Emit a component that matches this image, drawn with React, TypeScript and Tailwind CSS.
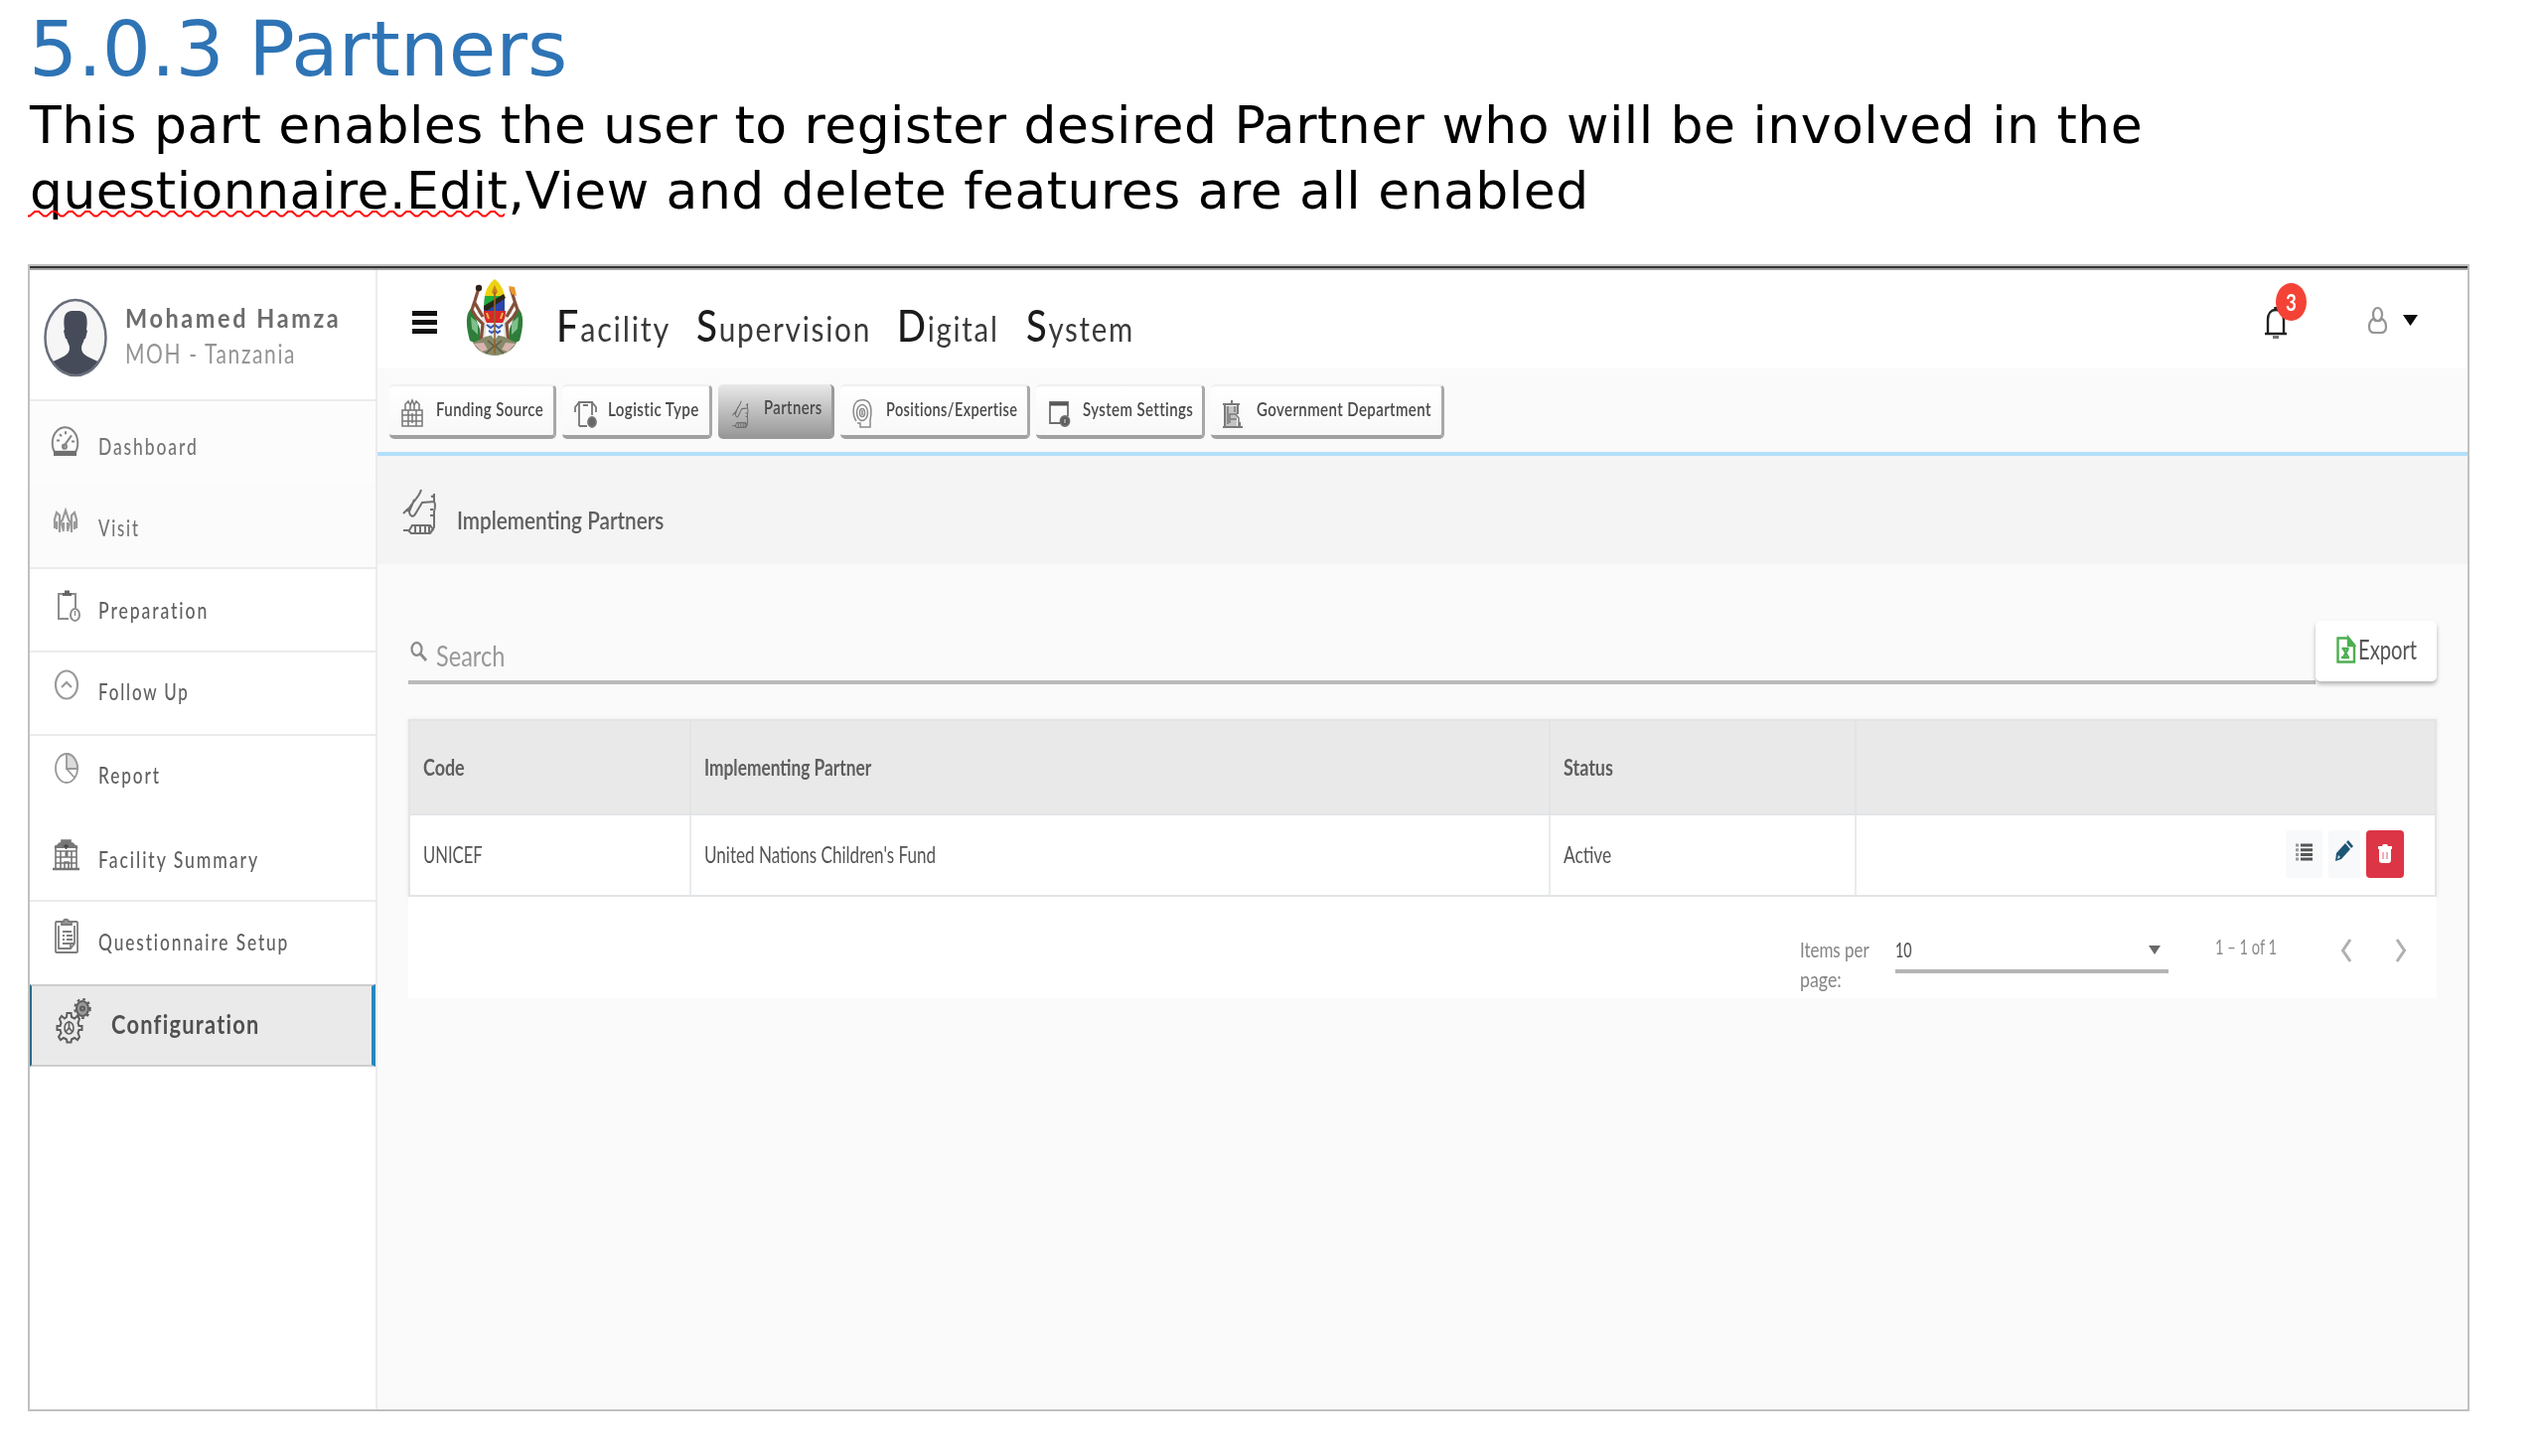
import { useLayoutEffect, useRef, useState } from "react";
import type { ReactNode } from "react";

/* Single line of text, condensed or stretched horizontally to fill its box. */
function Fit({ className, children }: { className: string; children: ReactNode }) {
  const outer = useRef<HTMLDivElement>(null);
  const inner = useRef<HTMLSpanElement>(null);
  const [ratio, setRatio] = useState(1);
  useLayoutEffect(() => {
    if (outer.current && inner.current) {
      setRatio(outer.current.clientWidth / inner.current.offsetWidth);
    }
  }, []);
  return (
    <div ref={outer} className={"shrink-0 whitespace-nowrap " + className}>
      <span ref={inner} className="inline-block origin-left" style={{ transform: `scaleX(${ratio})` }}>
        {children}
      </span>
    </div>
  );
}

function Icon({ box, className, children, sw = 1.5 }: { box: string; className: string; children: ReactNode; sw?: number }) {
  return (
    <svg
      viewBox={box}
      preserveAspectRatio="none"
      className={"block shrink-0 overflow-visible " + className}
      fill="none"
      stroke="currentColor"
      strokeWidth={sw}
    >
      {children}
    </svg>
  );
}

const Gauge = () => (
  <Icon box="0 0 27 29" className="h-[30px] w-[27px] text-[#858585]" sw={2}>
    <path d="M4 27C-1 20 0 10 5 5 10 0 17 0 22 5 27 10 28 20 23 27Z" />
    <path d="M2 26.500h23" strokeWidth={5} stroke="#707070" />
    <path d="M12 20l8-11M13 21l-2-3M5 14h3M8 8l2 2M14 5v3M20 15h3" />
    <circle cx="13" cy="20" r="2" />
  </Icon>
);

const People = () => (
  <Icon box="0 0 26 25" className="h-[25px] w-[26px] text-[#9a9a9a]" sw={2.200}>
    <path d="M2 19V10L4 3l3 3v9l3-5 3-9 3 9 3 5V6l3-3 2 7v9" />
    <path d="M4 20v-8M22 20v-8M7 23v-8M19 23v-8M11 20v-7M15 20v-7" />
    <path d="M9 14l2 8M17 14l-2 8" />
  </Icon>
);

const Clipboard = () => (
  <Icon box="0 0 24 32" className="h-[32px] w-[24px] text-[#8d8d8d]" sw={2}>
    <path d="M12 29H2V4h17v14" />
    <path d="M6 4.500h9M8 2h5" strokeWidth={3} stroke="#666" />
    <ellipse cx="18.500" cy="25" rx="4.500" ry="6" />
    <path d="M18.500 21v5" strokeWidth={1.500} />
  </Icon>
);

const UpCircle = () => (
  <Icon box="0 0 24 31" className="h-[31px] w-[24px] text-[#9a9a9a]" sw={2.200}>
    <ellipse cx="12" cy="15.500" rx="11" ry="14" />
    <path d="M7 18l5-5 5 5" />
  </Icon>
);

const Pie = () => (
  <Icon box="0 0 24 31" className="h-[31px] w-[24px] text-[#999]" sw={1.800}>
    <ellipse cx="12" cy="15.500" rx="11" ry="14.500" />
    <path d="M12 1v15h11C23 8 18 1 12 1Z" fill="#dcdcdc" />
    <path d="M12 16l8 9" />
  </Icon>
);

const Hospital = () => (
  <Icon box="0 0 27 31" className="h-[31px] w-[27px] text-[#757575]" sw={1.600}>
    <path d="M3 30V6M24 30V6M3 12h21M3 18h21M3 24h21M8 12v18M19 12v18M12 30v-7h4v7" />
    <path d="M2 9l5-5h13l5 5M9 4V1h9v3" fill="#777" />
    <path d="M11 7h5M13.500 5v5" stroke="#444" />
    <path d="M13 13h1v5" strokeWidth={3} />
    <path d="M0 30h27" strokeWidth={2.500} />
  </Icon>
);

const Survey = () => (
  <Icon box="0 0 24 35" className="h-[35px] w-[24px] text-[#7d7d7d]" sw={1.800}>
    <rect x="1" y="3" width="22" height="31" rx="1" />
    <path d="M4 7v23h12l4-5V7" />
    <path d="M7 6h10V3h-3c0-3-5-3-5 0H7Z" fill="#999" />
    <path d="M8 13h9M8 17h2M12 17h6M8 21h2M12 21h6M8 25h7" />
    <path d="M16 30v-5h4" />
  </Icon>
);

const Gears = () => (
  <Icon box="0 0 36 44" className="h-[44px] w-[36px] text-[#5d5d5d]" sw={2}>
    <path
      d="M11.500 15h4l.5 4 3 1.500 3-2.500 2 3-1.500 4 1 3h3v4h-3l-1 3 1.500 4-2 3-3-2-3 1.500-.5 3h-4l-.5-3-3-1.500-3 2-2-3L5.500 35l-1-3H1.500v-4h3l1-3L4 21l2-3 3 2.500 2-1.500Z"
    />
    <ellipse cx="13.500" cy="30" rx="4.500" ry="6" strokeWidth={1.600} />
    <path d="M13.500 23v8M10 34l3.500-4 3.500 4" strokeWidth={1.600} />
    <ellipse cx="27" cy="10.500" rx="6" ry="7.500" fill="#9a9a9a" />
    <ellipse cx="27" cy="10.500" rx="7.700" ry="9.500" strokeDasharray="2.800 3" strokeWidth={2} />
    <circle cx="27" cy="10.500" r="2" />
  </Icon>
);

const menu = [
  { label: "Dashboard", icon: <Gauge />, row: "bg-[#fcfcfc] h-[84px]", ic: "pt-[25px] pl-[22px]", tx: "pt-[32px] w-[101px]", text: "text-[#747474]" },
  { label: "Visit", icon: <People />, row: "bg-[#fbfbfb] h-[85px] border-b-2 border-[#ebebeb]", ic: "pt-[25px] pl-[23px]", tx: "pt-[30px] w-[42px]", text: "text-[#747474]" },
  { label: "Preparation", icon: <Clipboard />, row: "h-[84px] border-b-2 border-[#ebebeb]", ic: "pt-[21px] pl-[27px]", tx: "pt-[28px] w-[111px]", text: "text-[#606060]" },
  { label: "Follow Up", icon: <UpCircle />, row: "h-[84px] border-b-2 border-[#ebebeb]", ic: "pt-[17px] pl-[25px]", tx: "pt-[26px] w-[92px]", text: "text-[#606060]" },
  { label: "Report", icon: <Pie />, row: "h-[83px]", ic: "pt-[17px] pl-[25px]", tx: "pt-[26px] w-[63px]", text: "text-[#606060]" },
  { label: "Facility Summary", icon: <Hospital />, row: "h-[84px] border-b-2 border-[#ebebeb]", ic: "pt-[21px] pl-[23px]", tx: "pt-[28px] w-[162px]", text: "text-[#606060]" },
  { label: "Questionnaire Setup", icon: <Survey />, row: "h-[83px]", ic: "pt-[17px] pl-[25px]", tx: "pt-[27px] w-[192px]", text: "text-[#606060]" },
];

const FundingIcon = () => (
  <Icon box="0 0 22 28" className="h-[28px] w-[22px] text-[#777]">
    <rect x="1" y="11" width="20" height="16" />
    <path d="M1 16h20M1 22h20M7 11v16M15 11v16M11 14v10M4 11V5l3-3 2 4 2-5 2 5 2-4 3 3v6M9 11V6M13 11V6" />
  </Icon>
);
const LogisticIcon = () => (
  <Icon box="0 0 23 29" className="h-[29px] w-[23px] text-[#777]" sw={1.800}>
    <path d="M5 27V3h13v13M13 27H5M5 3L1 8v5M18 3l4 5v5M9 6h5" />
    <ellipse cx="18" cy="23" rx="4" ry="5" fill="#666" />
  </Icon>
);
const HandIcon = ({ className }: { className: string }) => (
  <Icon box="0 0 35 46" className={className} sw={2}>
    <path d="M19 1c-2 8-9 12-14 22M1 25l5-5M7 22c0 6 4 8 7 2l6-10 13-1M12 11L7 23M32 5v8c2 3 1 6 0 10v16l-3 4M29 8l4-1M28 21h3M28 27h3" />
    <path d="M1 42h6l3-5h18l3 4-3 4H9l-3-3M13 37v8M18 37v8M23 37v8M27 38v6" />
  </Icon>
);
const HeadIcon = () => (
  <Icon box="0 0 20 29" className="h-[29px] w-[20px] text-[#8a8a8a]">
    <path d="M4 22C0 16 0 6 5 2c4-2 10-2 12 2 3 5 2 12 1 17v7H8v-4H5" />
    <ellipse cx="10" cy="13.500" rx="5.500" ry="8" />
    <ellipse cx="10" cy="13.500" rx="2.500" ry="4" />
    <path d="M10 11v5" />
  </Icon>
);
const WindowIcon = () => (
  <Icon box="0 0 21 26" className="mt-[2px] h-[26px] w-[21px] text-[#6e6e6e]" sw={1.800}>
    <path d="M12 22H1V1h18v14" />
    <path d="M1 3h18" strokeWidth={3} stroke="#555" />
    <ellipse cx="16" cy="20" rx="4.500" ry="5" fill="#5d5d5d" />
    <path d="M16 18v4" stroke="#ddd" strokeWidth={1} />
  </Icon>
);
const BuildingIcon = () => (
  <Icon box="0 0 20 28" className="mt-[1px] h-[28px] w-[20px] text-[#7a7a7a]">
    <path d="M0 4h17M9 0v4M2 4v23h6M15 4v10" strokeWidth={2} />
    <rect x="3" y="6" width="11" height="20" fill="#c4c4c4" stroke="none" />
    <path d="M5 6v18M12 6v6M7 23V14h6l3 4v8M8 19h6" />
    <path d="M0 27h20M17 22v5" strokeWidth={2} />
  </Icon>
);

const tabs = [
  { label: "Funding Source", w: "w-[168px] pl-[12px] gap-[13px]", t: "w-[108px]", icon: <FundingIcon /> },
  { label: "Logistic Type", w: "w-[151px] pl-[12px] gap-[11px]", t: "w-[92px]", icon: <LogisticIcon /> },
  { label: "Partners", w: "w-[117px] pl-[14px] gap-[15px]", t: "w-[59px]", icon: <HandIcon className="h-[28px] w-[17px] text-[#6f6f6f]" />, active: true },
  { label: "Positions/Expertise", w: "w-[191px] pl-[12px] gap-[14px]", t: "w-[132px]", icon: <HeadIcon /> },
  { label: "System Settings", w: "w-[170px] pl-[13px] gap-[13px]", t: "w-[111px]", icon: <WindowIcon /> },
  { label: "Government Department", w: "w-[235px] pl-[12px] gap-[14px]", t: "w-[176px]", icon: <BuildingIcon /> },
];

const Avatar = () => (
  <svg viewBox="0 0 64 80" className="block h-[80px] w-[64px] shrink-0">
    <defs>
      <clipPath id="face"><ellipse cx="32" cy="40" rx="30" ry="38" /></clipPath>
    </defs>
    <ellipse cx="32" cy="40" rx="30.500" ry="38" fill="#f6f6f6" />
    <g clipPath="url(#face)" fill="#454b58">
      <path d="M21 32C18 12 26 13 32 13c6 0 14-1 11 19l1 1-2 8h-1c-1 4-3 6-3 9 0 8 7 9 21 16v15H5V66c14-7 21-8 21-16 0-3-2-5-3-9h-1l-2-8Z" />
    </g>
    <ellipse cx="32" cy="40" rx="30.500" ry="38" fill="none" stroke="#6a6f7c" strokeWidth="2.500" />
  </svg>
);

const Emblem = () => (
  <svg viewBox="0 0 58 78" className="block h-[78px] w-[58px] shrink-0">
    <path d="M6 29C-1 34 0 48 4 62l12 6-2-18Z" fill="#2f7d3a" />
    <path d="M52 29c7 5 6 19 2 33l-12 6 2-18Z" fill="#2f7d3a" />
    <path d="M5 38l7 6v12l-6-6Z" fill="#7fbf8b" />
    <path d="M53 38l-7 6v12l6-6Z" fill="#7fbf8b" />
    <path d="M12 32l7 4-2 22M46 32l-7 4 2 22" fill="none" stroke="#e4e4de" strokeWidth="5" />
    <path d="M13 9l-4 13-3 9 5 8 6 6-2 19M9 24l8 14" fill="none" stroke="#84503a" strokeWidth="3.200" />
    <path d="M45 9l4 13 3 9-5 8-6 6 2 19M49 24l-8 14" fill="none" stroke="#84503a" strokeWidth="3.200" />
    <circle cx="13" cy="9" r="3.200" fill="#2e211c" />
    <path d="M43 7l6 1 2 9-5-2Z" fill="#e8972b" />
    <path d="M14 61c7-6 23-6 30 0l7 3c-4 8-13 13-22 13S11 72 7 64Z" fill="#868a68" />
    <path d="M8 65l10-1 4 7-6 2ZM50 65l-10-1-4 7 6 2Z" fill="#d8b4b0" />
    <path d="M20 75l9-8 9 8M22 62l7 6 7-6" fill="none" stroke="#5c5c4a" strokeWidth="1.600" />
    <path d="M29 0c-5 4-9 10-10 17h20C38 10 34 4 29 0Z" fill="#ecd312" />
    <path d="M29 6l-3 7 3 4 3-4Z" fill="#c9801c" />
    <path d="M19 17h20v17H18Z" fill="#2b45a8" />
    <path d="M19 17h18L18 31Z" fill="#1fae39" />
    <path d="M18 31v-4l20-12 2 4-19 13Z" fill="#2a2716" />
    <path d="M18 32h22c0 5-1 9-3 12H21c-2-3-3-7-3-12Z" fill="#d8282a" />
    <path d="M21 34l2 6M37 34l-2 6" stroke="#e7b93b" strokeWidth="2" />
    <path d="M21 44h16c-1 8-4 13-8 17-4-4-7-9-8-17Z" fill="#dfe6f4" />
    <path d="M21 46l4 3 4-3 4 3 4-3M23 52l3 2 3-2 3 2 3-2" fill="none" stroke="#3458b4" strokeWidth="2" />
    <path d="M29 13v62" stroke="#94642b" strokeWidth="1.600" />
  </svg>
);

function Sidebar() {
  return (
    <aside className="flex w-[350px] shrink-0 flex-col border-r-2 border-[#ececec] bg-white">
      <div className="flex h-[132px] border-b-2 border-[#ebebeb] pt-[28px] pl-[14px]">
        <Avatar />
        <div className="pt-[4px] pl-[18px]">
          <Fit className="w-[217px] text-[27px] font-bold leading-[32px] tracking-[3px] text-[#6c6c6c]">Mohamed Hamza</Fit>
          <Fit className="w-[172px] pt-[4px] text-[26px] leading-[32px] tracking-[2px] text-[#949494]">MOH - Tanzania</Fit>
        </div>
      </div>
      {menu.map((m) => (
        <div key={m.label} className={"flex " + m.row}>
          <div className={"w-[69px] " + m.ic}>{m.icon}</div>
          <Fit className={"text-[23px] font-medium leading-[26px] tracking-[2.500px] " + m.tx + " " + m.text}>{m.label}</Fit>
        </div>
      ))}
      <div className="flex h-[83px] border-y-2 border-r-4 border-l-2 border-y-[#cdcdcd] border-r-[#2488c2] border-l-[#2d6b88] bg-[#eaeaea]">
        <div className="w-[80px] pt-[12px] pl-[24px]"><Gears /></div>
        <Fit className="w-[150px] pt-[23px] text-[26px] font-bold leading-[30px] tracking-[1.500px] text-[#505050]">Configuration</Fit>
      </div>
    </aside>
  );
}

function TitleWord({ first, rest, className }: { first: string; rest: string; className: string }) {
  return (
    <Fit className={"text-[44px] font-medium leading-[44px] tracking-[2px] text-[#1b1b1b] " + className}>
      {first}<span className="text-[34px] font-normal text-[#3a3a3a]">{rest}</span>
    </Fit>
  );
}

function Header() {
  return (
    <header className="flex h-[99px] shrink-0 bg-white">
      <div className="flex w-[89px] flex-col gap-[4px] pt-[41px] pl-[35px]">
        <div className="h-[5px] w-[25px] bg-[#111]" />
        <div className="h-[5px] w-[25px] bg-[#111]" />
        <div className="h-[5px] w-[25px] bg-[#111]" />
      </div>
      <div className="pt-[9px]"><Emblem /></div>
      <div className="flex grow pt-[33px] pl-[33px]">
        <TitleWord first="F" rest="acility" className="mr-[26px] w-[115px]" />
        <TitleWord first="S" rest="upervision" className="mr-[26px] w-[176px]" />
        <TitleWord first="D" rest="igital" className="mr-[27px] w-[103px]" />
        <TitleWord first="S" rest="ystem" className="w-[109px]" />
      </div>
      <div className="relative w-[105px] pt-[36px]">
        <Icon box="0 0 24 33" className="h-[33px] w-[24px] text-[#222]" sw={2.400}>
          <path d="M4 27V14C4 8 7 4 12 4s8 4 8 10v13M1 28h22" />
          <path d="M12 1v4" strokeWidth={3.500} />
          <path d="M9 31.500h6" stroke="#777" strokeWidth={3} />
        </Icon>
        <div className="absolute top-[13px] left-[12px] flex h-[38px] w-[31px] items-center justify-center rounded-[50%] bg-[#f44336] text-[22px] font-bold text-white">
          <span className="scale-x-[0.850]">3</span>
        </div>
      </div>
      <div className="w-[35px] pt-[37px]">
        <Icon box="0 0 19 27" className="h-[27px] w-[19px] text-[#949494]" sw={2.200}>
          <ellipse cx="9.500" cy="7.500" rx="4.500" ry="6.500" />
          <path d="M5 12c-3 2-4 5-4 8 0 4 2 6 5 6h7c3 0 5-2 5-6 0-3-1-6-4-8-2 3-7 3-9 0Z" />
        </Icon>
      </div>
      <div className="w-[65px] pt-[45px]">
        <svg viewBox="0 0 15 11" className="block h-[11px] w-[15px]"><path d="M0 0h15L7.500 11Z" fill="#0b0b0b" /></svg>
      </div>
    </header>
  );
}

function Tabs() {
  return (
    <nav className="flex h-[88px] shrink-0 gap-[6px] border-b-4 border-[#b3e0fb] bg-[#fafafa] pt-[16px] pl-[12px]">
      {tabs.map((t) => (
        <div
          key={t.label}
          className={
            "flex h-[55px] shrink-0 rounded-[5px] border-r-3 border-b-4 " +
            (t.active
              ? "border-r-[#9a9a9a] border-b-[#989898] bg-linear-to-b from-[#e9e9e9] to-[#9b9b9b] pt-[16px] "
              : "border-t-2 border-t-[#f0f0f0] border-r-[#a8a8a8] border-b-[#a0a0a0] bg-linear-to-b from-white to-[#f8f8f8] pt-[13px] ") +
            t.w
          }
        >
          {t.icon}
          <Fit
            className={
              (t.active ? "mt-[-3px] " : "") +
              "text-[19.500px] font-semibold leading-[20px] tracking-[0.500px] text-[#4a4a4a] " +
              t.t
            }
          >
            {t.label}
          </Fit>
        </div>
      ))}
    </nav>
  );
}

const cols = "grid grid-cols-[283px_865px_308px_1fr]";

function Table() {
  return (
    <div className="border-2 border-[#e2e5e8] shadow-[0_0_4px_rgba(0,0,0,0.080)]">
      <div className={cols + " h-[95px] divide-x-2 divide-[#e2e4e6] border-b-2 border-[#e2e4e6] bg-[#e9e9e9] text-[23px] font-bold leading-[28px] text-[#5e5e5e]"}>
        <div className="pt-[32px] pl-[13px]"><Fit className="w-[42px]">Code</Fit></div>
        <div className="pt-[32px] pl-[13px]"><Fit className="w-[168px]">Implementing Partner</Fit></div>
        <div className="pt-[32px] pl-[13px]"><Fit className="w-[50px]">Status</Fit></div>
        <div />
      </div>
      <div className={cols + " h-[80px] divide-x-2 divide-[#e9ebed] bg-white text-[23px] leading-[28px] text-[#555]"}>
        <div className="pt-[25px] pl-[13px]"><Fit className="w-[60px]">UNICEF</Fit></div>
        <div className="pt-[25px] pl-[13px]"><Fit className="w-[233px]">United Nations Children's Fund</Fit></div>
        <div className="pt-[25px] pl-[13px]"><Fit className="w-[48px]">Active</Fit></div>
        <div className="flex justify-end gap-[6px] pt-[15px] pr-[31px]">
          <div className="flex h-[48px] w-[37px] justify-center rounded-[3px] bg-[#f8f9fa] pt-[13px]">
            <Icon box="0 0 17 18" className="h-[18px] w-[17px] text-[#555]" sw={3}>
              <path d="M5 2h12M5 6.700h12M5 11.400h12M5 16h12" />
              <path d="M0 2h3M0 6.700h3M0 11.400h3M0 16h3" stroke="#999" />
            </Icon>
          </div>
          <div className="flex h-[48px] w-[32px] justify-center rounded-[3px] bg-[#f8f9fa] pt-[10px]">
            <svg viewBox="0 0 18 22" className="block h-[22px] w-[18px]">
              <path d="M0 21l1-8L10 3l5 6-9 10Z" fill="#1d5675" />
              <path d="M11 2l2-2 5 6-2 2Z" fill="#1d5675" />
              <path d="M2 19l1-4 2 2Z" fill="#dfe8ee" />
            </svg>
          </div>
          <div className="flex h-[48px] w-[38px] justify-center rounded-[4px] bg-[#dc3545] pt-[14px]">
            <svg viewBox="0 0 14 19" className="block h-[19px] w-[14px]">
              <path d="M0 2h4l1-2h4l1 2h4v3H0Z" fill="#fff" />
              <path d="M1 5h12v11q0 3-3 3H4q-3 0-3-3Z" fill="#fff" />
              <path d="M5 8v7M9 8v7" stroke="#ee9aa2" strokeWidth="1.600" />
            </svg>
          </div>
        </div>
      </div>
    </div>
  );
}

function Pager() {
  return (
    <div className="flex h-[102px] justify-end bg-white text-[22px] leading-[30px] text-[#858585]">
      <div className="w-[96px] pt-[38px]">
        <Fit className="w-[70px]">Items per</Fit>
        <Fit className="w-[42px]">page:</Fit>
      </div>
      <div className="mt-[38px] flex h-[39px] w-[275px] justify-between border-b-4 border-[#b5b5b5] pr-[8px]">
        <Fit className="w-[17px] font-medium text-[#555]">10</Fit>
        <svg viewBox="0 0 12 9" className="mt-[11px] block h-[9px] w-[12px]"><path d="M0 0h12L6 9Z" fill="#6a6a6a" /></svg>
      </div>
      <div className="w-[174px] pt-[35px] pl-[47px] text-[#8c8c8c]"><Fit className="w-[62px]">1 – 1 of 1</Fit></div>
      <div className="flex w-[96px] gap-[45px] pt-[42px] text-[#b0b0b0]">
        <Icon box="0 0 10 24" className="h-[24px] w-[10px]" sw={3}><path d="M9 1L1.500 12 9 23" /></Icon>
        <Icon box="0 0 10 24" className="h-[24px] w-[10px]" sw={3}><path d="M1 1l7.500 11L1 23" /></Icon>
      </div>
    </div>
  );
}

function Toolbar() {
  return (
    <div className="flex h-[61px]">
      <div className="mb-[-3px] flex grow border-b-4 border-[#bababa]">
        <Icon box="0 0 17 20" className="mt-[21px] ml-[2px] h-[20px] w-[17px] text-[#8a8a8a]" sw={2.200}>
          <ellipse cx="6.500" cy="7.500" rx="5" ry="6.300" />
          <path d="M10 12l6 7" strokeWidth={2.800} />
        </Icon>
        <Fit className="ml-[9px] w-[69px] pt-[18px] text-[29px] leading-[34px] text-[#999]">Search</Fit>
      </div>
      <button className="flex h-[61px] w-[122px] shrink-0 rounded-[5px] bg-white pt-[16px] pl-[21px] shadow-[0_3px_4px_rgba(0,0,0,0.280)]">
        <Icon box="0 0 19 27" className="h-[27px] w-[19px] text-[#4caf50]" sw={2.400}>
          <path d="M2 1.500h10l6 7V25.500H1.500V1.500Z" />
          <path d="M12 1v8h6Z" fill="currentColor" />
          <path d="M5.500 12h7M7 12l5 9M12 12l-5 9M5 21h8" />
        </Icon>
        <Fit className="ml-[3px] w-[59px] text-[26px] leading-[26px] text-[#555]">Export</Fit>
      </button>
    </div>
  );
}

export default function App() {
  return (
    <div className="h-[1466px] w-[2559px] overflow-hidden bg-white">
      <h1 className="h-[93px] pt-[6px] pl-[29px] font-['DejaVu_Sans'] text-[76px] leading-[87px] text-[#2e74b5]">
        <Fit className="w-[542px]">5.0.3 Partners</Fit>
      </h1>
      <div className="pl-[30px] font-['DejaVu_Sans'] text-[52px] leading-[66px] text-black">
        <Fit className="w-[2127px] tracking-[0.500px]">This part enables the user to register desired Partner who will be involved in the</Fit>
        <div className="relative">
          <Fit className="w-[1570px] tracking-[0.500px]">questionnaire.Edit,View and delete features are all enabled</Fit>
          <svg className="absolute top-[53px] left-[-2px] h-[7px] w-[480px]">
            <defs>
              <pattern id="wave" width="17" height="7" patternUnits="userSpaceOnUse">
                <path d="M0 5.500h2L7 1h4l5 4.500h2" fill="none" stroke="#f00" strokeWidth="1.800" />
              </pattern>
            </defs>
            <rect width="480" height="7" fill="url(#wave)" />
          </svg>
        </div>
      </div>
      <main className="mt-[41px] ml-[28px] flex h-[1155px] w-[2458px] overflow-hidden border-2 border-[#c0c0c0] font-['Lato',sans-serif]">
        <div className="flex grow flex-col">
          <div className="h-[2px] bg-[#333]" />
          <div className="h-[2px] bg-[#a5a5a5]" />
          <div className="flex grow blur-[0.600px]">
            <Sidebar />
            <div className="flex grow flex-col bg-[#fafafa]">
              <Header />
              <Tabs />
              <div className="flex h-[109px] shrink-0 gap-[20px] bg-[#f4f4f4] pt-[33px] pl-[25px]">
                <HandIcon className="h-[46px] w-[35px] text-[#707070]" />
                <Fit className="w-[208px] pt-[16px] text-[25px] font-semibold leading-[30px] text-[#5e5e5e]">Implementing Partners</Fit>
              </div>
              <div className="flex flex-col px-[31px] pt-[57px]">
                <Toolbar />
                <div className="mt-[38px]"><Table /></div>
                <Pager />
              </div>
            </div>
          </div>
        </div>
      </main>
    </div>
  );
}
